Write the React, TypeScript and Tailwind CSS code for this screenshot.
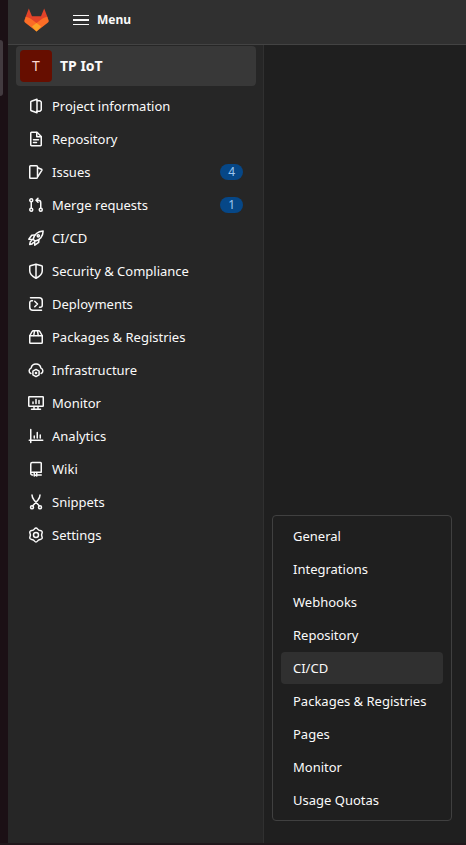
import type { ReactNode } from "react";

type NavItem = { label: string; icon: ReactNode; count?: number };

const navItems: NavItem[] = [
  {
    label: "Project information",
    icon: (
      <>
        <path d="M9 1.2v13.6l-5.7-2.1a.8.8 0 0 1-.55-.75v-7.9a.8.8 0 0 1 .55-.75z" />
        <path d="M9.25 2.75h2.7l1.3 1.3v7.9l-1.3 1.3h-2.7" />
      </>
    ),
  },
  {
    label: "Repository",
    icon: (
      <>
        <path d="M3.5 1.25h5.5l4.25 4.25v8.5a.75.75 0 0 1-.75.75h-9a.75.75 0 0 1-.75-.75v-12a.75.75 0 0 1 .75-.75z" />
        <path d="M8.75 1.5v4.25h4.25M5.5 8.75h5M5.5 11.5h3" />
      </>
    ),
  },
  {
    label: "Issues",
    count: 4,
    icon: (
      <>
        <path d="M2.5 1.75h6a1 1 0 0 1 1 1v10.5a1 1 0 0 1-1 1h-6a.75.75 0 0 1-.75-.75v-11a.75.75 0 0 1 .75-.75z" />
        <path d="M9.75 3.75l3.7 1.5a.8.8 0 0 1 .4 1.1l-3.85 5.9" />
      </>
    ),
  },
  {
    label: "Merge requests",
    count: 1,
    icon: (
      <>
        <circle cx="3.25" cy="3.25" r="1.5" />
        <circle cx="3.25" cy="12.75" r="1.5" />
        <circle cx="12.75" cy="12.75" r="1.5" />
        <path d="M3.25 5v6M12.75 11V5.75a2.5 2.5 0 0 0-2.5-2.5h-1.8M10 1.25l-2 2 2 2" />
      </>
    ),
  },
  {
    label: "CI/CD",
    icon: (
      <>
        <path d="M5.2 9.2c.8-4.3 4.5-8 9.9-8.3.2 5.3-3.5 9.300-8 10.200z" />
        <path d="M6.700 5.100l-3 .2-2.900 3.900 4.200.2M10.900 9.400l-.2 3-3.900 2.800-.2-4.200M3.600 10.700c-1.200.6-1.800 1.900-1.900 3.700 1.700 0 3-.6 3.600-1.800" />
        <circle cx="10.3" cy="5.8" r="1.1" />
      </>
    ),
  },
  {
    label: "Security & Compliance",
    icon: (
      <>
        <path d="M8 1.200l5.700 1.500a.7.7 0 0 1 .55.7V8c0 3-2.500 5.400-6.250 7.200C4.250 13.400 1.750 11 1.750 8V3.400a.7.7 0 0 1 .55-.7z" />
        <path d="M8 1.500v13.300" />
      </>
    ),
  },
  {
    label: "Deployments",
    icon: (
      <>
        <path d="M2.5 1.75h8.75a3 3 0 0 1 3 3v4.5a2 2 0 0 1-2 2h-.75" />
        <path d="M13.5 14.25H4.75a3 3 0 0 1-3-3v-4.5a2 2 0 0 1 2-2h.75" />
        <path d="M6.75 5.25L9.500 8l-2.750 2.750" />
      </>
    ),
  },
  {
    label: "Packages & Registries",
    icon: (
      <>
        <path d="M1.750 6.750h12.500v6.750a.75.75 0 0 1-.75.75h-11a.75.75 0 0 1-.75-.75z" />
        <path d="M1.750 6.750l2.200-4a2 2 0 0 1 1.700-1h4.700a2 2 0 0 1 1.700 1l2.200 4M6.500 2l-.75 4.500M9.500 2l.75 4.500" />
      </>
    ),
  },
  {
    label: "Infrastructure",
    icon: (
      <>
        <path d="M2.900 11.500a2.900 2.900 0 0 1 .2-5.400 5 5 0 0 1 9.800 0 2.900 2.900 0 0 1 .2 5.400" />
        <path d="M8 7.400l3.100 1.800v3.600l-3.100 1.800-3.100-1.800V9.200z" />
        <circle cx="8" cy="11" r=".6" />
      </>
    ),
  },
  {
    label: "Monitor",
    icon: (
      <>
        <rect x=".75" y="1.75" width="14.5" height="9.5" rx=".5" />
        <path d="M5 8.5v-1.5M8 8.5v-4M11 8.5v-3M6 11.5v2.5M10 11.5v2.5M3.500 14.250h9" />
      </>
    ),
  },
  {
    label: "Analytics",
    icon: <path d="M2.750 1.500v13M1.250 12.250h13.500M6.250 10v-2M9.250 10v-5.500M12.250 10v-3" />,
  },
  {
    label: "Wiki",
    icon: (
      <>
        <path d="M4 11.250h9.250v-9a.75.75 0 0 0-.75-.75h-8.250a1.500 1.500 0 0 0-1.500 1.500v9.500a1.500 1.500 0 0 0 1.500 1.500h.5" />
        <path d="M6.250 11.500v3.500l1.250-1 1.250 1v-3.500M8.750 14h4.500" />
      </>
    ),
  },
  {
    label: "Snippets",
    icon: (
      <>
        <circle cx="4" cy="13.25" r="1.5" />
        <circle cx="12" cy="13.25" r="1.5" />
        <path d="M4 1c0 2 .9 3.600 2.200 5.200l5 5.600M12 1c0 2-.9 3.600-2.200 5.200l-5 5.600" />
      </>
    ),
  },
  {
    label: "Settings",
    icon: (
      <>
        <path d="M8 1C9.3 1 9.67 2.5 10.8 3.15S13.41 3.37 14.06 4.5 13.6 6.7 13.6 8 14.71 10.37 14.06 11.5 11.93 12.2 10.8 12.85 9.3 15 8 15 6.33 13.5 5.2 12.85 2.59 12.63 1.94 11.5 2.4 9.3 2.4 8 1.29 5.63 1.94 4.5 4.07 3.8 5.2 3.15 6.7 1 8 1z" />
        <circle cx="8" cy="8" r="2.5" />
      </>
    ),
  },
];

const settingsLinks = [
  "General",
  "Integrations",
  "Webhooks",
  "Repository",
  "CI/CD",
  "Packages & Registries",
  "Pages",
  "Monitor",
  "Usage Quotas",
];

function Icon({ children }: { children: ReactNode }) {
  return (
    <svg
      viewBox="0 0 16 16"
      className="size-4 shrink-0"
      fill="none"
      stroke="currentColor"
      strokeWidth="1.5"
      strokeLinejoin="round"
      strokeLinecap="round"
      aria-hidden="true"
    >
      {children}
    </svg>
  );
}

function Logo() {
  return (
    <svg viewBox="0 0 26 25" className="h-6 w-[25px]" aria-hidden="true">
      <path d="M5 .5L1.400 10 8.200 16.500 13 20l4.800-3.500L24.600 10 21 .5l-3.300 8H8.300z" fill="#e24329" />
      <path d="M1.800 9l-1.500 4c-.2.800 0 1.400.7 2L13 24.500 25 15c.7-.6.9-1.200.7-2l-1.500-4c-2.300.5-4.400 1.500-6.300 2.900L13 15.600l-4.900-3.700C6.200 10.500 4.100 9.500 1.800 9z" fill="#fc6d26" />
      <path d="M8.200 19.200L13 15.600l4.800 3.600-4.800 5.300z" fill="#fca326" />
    </svg>
  );
}

function SettingsFlyout() {
  return (
    <ul className="absolute -top-1 left-full z-10 ml-4 flex w-[180px] flex-col gap-px rounded border border-[#404040] bg-[#1f1f1f] px-2 py-1">
      {settingsLinks.map((label) => (
        <li key={label}>
          <a
            href="#"
            className={
              label === "CI/CD"
                ? "flex h-8 items-center whitespace-nowrap rounded bg-[#303030] px-3"
                : "flex h-8 items-center whitespace-nowrap rounded px-3"
            }
          >
            {label}
          </a>
        </li>
      ))}
    </ul>
  );
}

export default function App() {
  return (
    <div className="flex min-h-screen border-b-2 border-[#20171b] bg-[#1f1f1f] font-['Noto_Sans','Open_Sans',sans-serif] text-[13px] leading-5 text-[#fafafa]">
      <div className="w-2 shrink-0 bg-[#1b1015] pt-10">
        <div className="h-14 w-[3px] rounded-r bg-[#423a3f]" />
      </div>
      <div className="flex min-w-0 grow flex-col">
        <header className="flex h-[45px] items-center border-b border-[#434343] bg-[#303030] px-4 pb-1">
          <a href="#" aria-label="GitLab">
            <Logo />
          </a>
          <button type="button" className="ml-6 flex items-center gap-2 text-xs font-bold">
            <svg viewBox="0 0 16 12" className="h-3 w-4" fill="currentColor" aria-hidden="true">
              <path d="M0 1h16v1H0zM0 5h16v2H0zM0 10h16v1H0z" />
            </svg>
            Menu
          </button>
        </header>
        <div className="flex grow">
          <aside className="w-64 shrink-0 border-r border-[#303030] bg-[#262626] pl-2 pr-[7px] pt-px">
            <a href="#" className="flex h-10 items-center gap-2 rounded bg-[#383838] px-1 text-sm font-bold">
              <span className="flex size-8 items-center justify-center rounded bg-[#660e00] font-normal text-[#fcd9d3]">
                T
              </span>
              TP IoT
            </a>
            <nav className="pt-1">
              <ul className="flex flex-col gap-px">
                {navItems.map(({ label, icon, count }) => (
                  <li key={label} className="relative">
                    <a href="#" className="flex h-8 items-center gap-2 pl-3 pr-[13px]">
                      <Icon>{icon}</Icon>
                      <span className="grow">{label}</span>
                      {count && (
                        <span className="rounded-full bg-[#064787] px-2 text-xs leading-4 text-[#9dc7f1]">
                          {count}
                        </span>
                      )}
                    </a>
                    {label === "Settings" && <SettingsFlyout />}
                  </li>
                ))}
              </ul>
            </nav>
          </aside>
          <main className="grow" />
        </div>
      </div>
    </div>
  );
}
